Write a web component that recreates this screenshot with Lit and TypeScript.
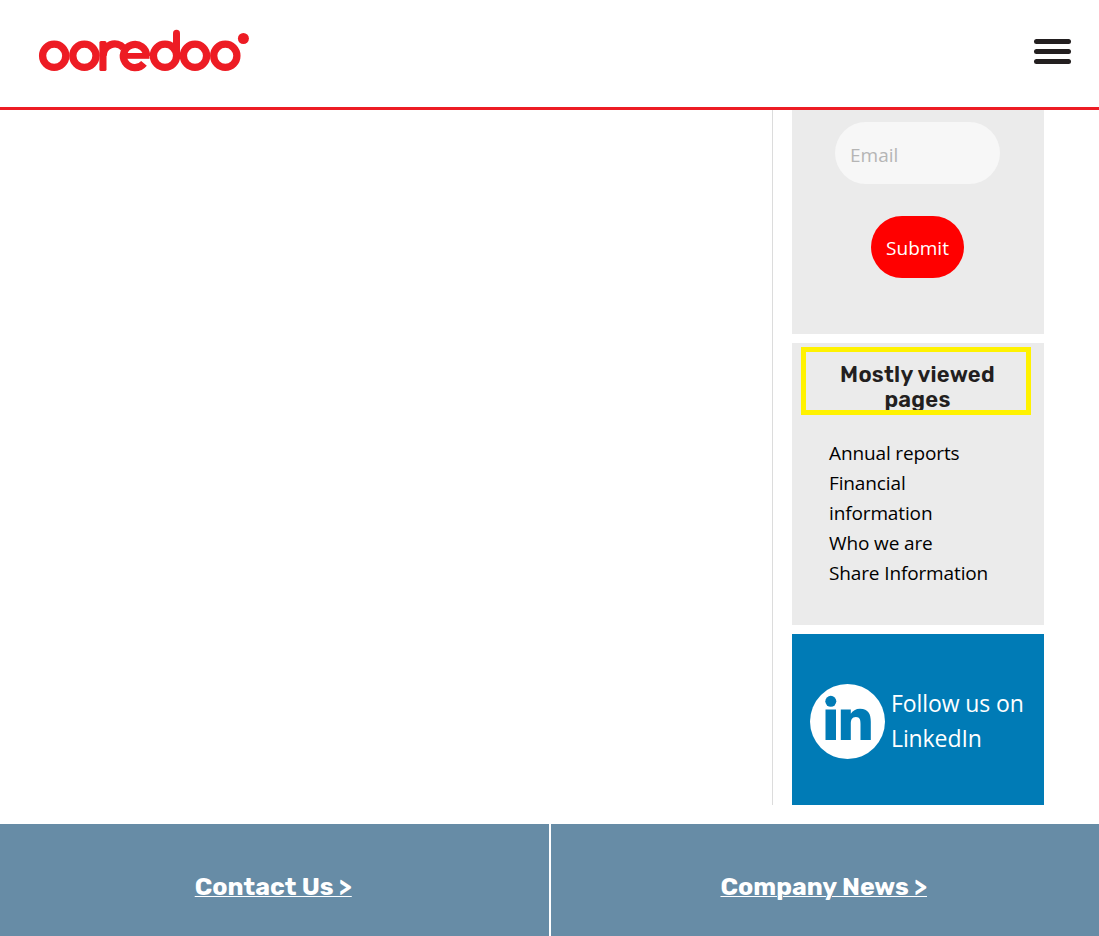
import { LitElement, css, html } from "lit";

const PAGES = ["Annual reports", "Financial information", "Who we are", "Share Information"];

class BrandLogo extends LitElement {
  static styles = css`
    :host {
      display: block;
      line-height: 0;
    }

    .ring {
      fill: none;
      stroke: #ed1c24;
      stroke-width: 7.3;
    }

    .round {
      stroke-width: 7;
      stroke-linecap: round;
    }

    .solid {
      fill: #ed1c24;
    }
  `;

  render() {
    return html`
      <svg width="212" height="44" viewBox="38 29 212 44" role="img" aria-label="ooredoo">
        <circle class="ring" cx="54.2" cy="55.8" r="11.6" />
        <circle class="ring" cx="84.4" cy="55.8" r="11.6" />
        <rect class="solid" x="99.4" y="41" width="7.1" height="30" rx="1.6" />
        <path class="ring" d="M103.2 56 A11.6 11.6 0 0 1 123.6 48" />
        <rect class="solid" x="124" y="53" width="25.5" height="5.8" />
        <path class="ring" d="M146.6 56 A11.6 11.6 0 1 0 144 63.4" />
        <circle class="ring" cx="165" cy="55.8" r="11.6" />
        <path class="ring round" d="M176.5 33.3 V56" />
        <circle class="ring" cx="195" cy="55.8" r="11.6" />
        <circle class="ring" cx="225.3" cy="55.8" r="11.6" />
        <circle class="solid" cx="243.4" cy="38.5" r="5.5" />
      </svg>
    `;
  }
}

class AppRoot extends LitElement {
  static styles = css`
    :host {
      display: flex;
      flex-direction: column;
      height: 936px;
      overflow: hidden;
      background: #fff;
      color: #000;
      font-family: "Open Sans", "Noto Sans", sans-serif;
    }

    * {
      box-sizing: border-box;
    }

    .header {
      display: flex;
      flex: none;
      align-items: flex-start;
      justify-content: space-between;
      height: 110px;
      padding: 29px 28px 0 38px;
      border-bottom: 3px solid #ed1c24;
    }

    .menu {
      display: flex;
      flex-direction: column;
      gap: 5px;
      margin-top: 10px;
      padding: 0;
      border: 0;
      background: none;
    }

    .bar {
      width: 37px;
      height: 5px;
      border-radius: 2.5px;
      background: #231f20;
    }

    .content {
      display: flex;
      flex: none;
      justify-content: flex-end;
      height: 695px;
      padding-right: 55px;
    }

    .sidebar {
      display: flex;
      flex-direction: column;
      gap: 9px;
      width: 272px;
      padding-left: 19px;
      border-left: 1px solid #dcdcdc;
    }

    .panel {
      background: #ebebeb;
    }

    .subscribe {
      display: flex;
      flex-direction: column;
      align-items: center;
      gap: 32px;
      height: 224px;
      padding: 12px 1px 0 0;
    }

    .email {
      width: 165px;
      height: 62px;
      padding: 3px 15px 0;
      border: 0;
      border-radius: 31px;
      background: #f7f7f7;
      font-family: inherit;
      font-size: 19px;
    }

    .email::placeholder {
      color: #b5b5b5;
      opacity: 1;
    }

    .submit {
      width: 93px;
      height: 62px;
      padding: 2px 0 0;
      border: 0;
      border-radius: 31px;
      background: #f00;
      color: #fff;
      font-family: inherit;
      font-size: 19px;
    }

    .viewed {
      height: 282px;
      padding: 4px 13px 0 9px;
    }

    .title {
      height: 68px;
      margin: 0;
      padding: 10px 20px 0 23px;
      border: 5px solid #fff200;
      overflow: hidden;
      color: #231f20;
      font-family: Rubik, Roboto, sans-serif;
      font-size: 22px;
      font-weight: 600;
      line-height: 25px;
      letter-spacing: 0.25px;
      text-align: center;
    }

    .pages {
      width: 170px;
      margin: 23px 0 0 28px;
      padding: 0;
      list-style: none;
      font-size: 19px;
      line-height: 30px;
      letter-spacing: -0.13px;
    }

    .follow {
      display: flex;
      align-items: center;
      gap: 6px;
      height: 171px;
      padding: 3px 0 0 18px;
      background: #007bb6;
      color: #fff;
      font-size: 23px;
      line-height: 35px;
      letter-spacing: -0.1px;
      text-decoration: none;
    }

    .follow svg {
      flex: none;
    }

    .links {
      display: flex;
      flex: none;
      gap: 2px;
      height: 112px;
      margin-top: 19px;
    }

    .cell {
      display: flex;
      flex: 1;
      align-items: center;
      justify-content: center;
      padding: 12px 2px 0 0;
      background: #678ca6;
    }

    .link {
      color: #fff;
      font-family: Rubik, Roboto, sans-serif;
      font-size: 25px;
      font-weight: 700;
      text-decoration: underline;
      text-decoration-thickness: 1px;
      text-underline-offset: 1px;
    }
  `;

  render() {
    return html`
      <header class="header">
        <brand-logo></brand-logo>
        <button class="menu" aria-label="Menu">
          <span class="bar"></span>
          <span class="bar"></span>
          <span class="bar"></span>
        </button>
      </header>
      <main class="content">
        <aside class="sidebar">
          <form class="panel subscribe">
            <input class="email" type="email" placeholder="Email" />
            <button class="submit" type="button">Submit</button>
          </form>
          <section class="panel viewed">
            <h2 class="title">Mostly viewed pages</h2>
            <ul class="pages">
              ${PAGES.map((page) => html`<li>${page}</li>`)}
            </ul>
          </section>
          <a class="follow" href="#">
            <svg width="75" height="75" viewBox="0 0 75 75" aria-hidden="true">
              <circle cx="37.5" cy="37.5" r="37.5" fill="#fff" />
              <g fill="#007bb6">
                <circle cx="20.8" cy="17.3" r="5.5" />
                <path d="M15.5 25.5h10.5v30.500h-10.500z" />
                <path d="M30.8 25.5h10v4.200c1.800-3 5-5 9.200-5 8.500 0 10.800 5.500 10.800 13V56H50.500V40c0-4-.5-7-4.600-7s-5.100 3-5.100 7v16H30.800z" />
              </g>
            </svg>
            <span>Follow us on<br />LinkedIn</span>
          </a>
        </aside>
      </main>
      <nav class="links">
        <div class="cell"><a class="link" href="#">Contact Us &gt;</a></div>
        <div class="cell"><a class="link" href="#">Company News &gt;</a></div>
      </nav>
    `;
  }
}

customElements.define("brand-logo", BrandLogo);
customElements.define("app-root", AppRoot);
